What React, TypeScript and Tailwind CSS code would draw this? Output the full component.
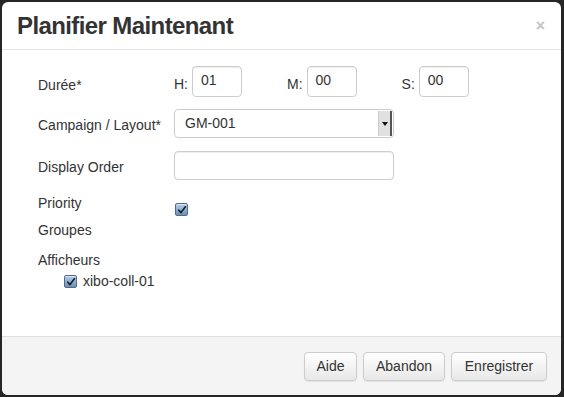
import React from "react";

const Check = () => (
  <span className="inline-flex h-[13px] w-[13px] items-center justify-center rounded-[2px] border border-[#4f6a8c] bg-gradient-to-b from-[#b7cde3] to-[#6f8fb4] shadow-[inset_0_1px_0_rgba(255,255,255,0.5)]">
    <svg width="10" height="10" viewBox="0 0 10 10">
      <path d="M1.8 5.2 L4 7.6 L8.4 1.8" fill="none" stroke="#16222f" strokeWidth="1.7" strokeLinecap="round" strokeLinejoin="round" />
    </svg>
  </span>
);

const TimeInput = ({ label, value }: { label: string; value: string }) => (
  <div className="flex items-center gap-[4px]">
    <span className="pt-[6px]">{label}</span>
    <div className="h-[31px] w-[50px] rounded-[4px] border border-[#ccc] bg-white pl-[8px] pt-[3px] shadow-[inset_0_1px_1px_rgba(0,0,0,0.075)]">
      {value}
    </div>
  </div>
);

const buttons = [
  { label: "Aide", w: "w-[53px]" },
  { label: "Abandon", w: "w-[82px]" },
  { label: "Enregistrer", w: "w-[96px]" },
];

export default function App() {
  return (
    <div
      className="h-[397px] w-[564px] overflow-hidden bg-[#262626] pl-[2px] pt-[2px] text-[14px] text-[#333]"
      style={{ fontFamily: '"Liberation Sans", Arial, sans-serif' }}
    >
      <div className="flex h-[393px] w-[559px] flex-col overflow-hidden rounded-[6px] bg-white">
        {/* header */}
        <div className="flex h-[48px] items-center justify-between border-b border-[#e5e5e5] pl-[15px] pr-[16px]">
          <h3 className="text-[24px] font-bold leading-none tracking-[-0.6px] text-[#333]">Planifier Maintenant</h3>
          <span className="text-[16px] font-bold text-[#c4c4c4]">×</span>
        </div>

        {/* body */}
        <div className="flex-1 pl-[36px] pt-[16px]">
          <div className="flex h-[31px] items-center">
            <div className="w-[136px] pt-[7px]">Durée*</div>
            <div className="flex items-center">
              <TimeInput label="H:" value="01" />
              <div className="ml-[45px]">
                <TimeInput label="M:" value="00" />
              </div>
              <div className="ml-[45px]">
                <TimeInput label="S:" value="00" />
              </div>
            </div>
          </div>

          <div className="mt-[12px] flex h-[29px] items-center">
            <div className="w-[136px] pt-[4px]">Campaign / Layout*</div>
            <div className="flex h-[29px] w-[220px] items-center rounded-[4px] border border-[#ccc] bg-white">
              <span className="flex-1 pl-[10px]">GM-001</span>
              <span className="mr-[1px] flex h-[25px] w-[14px] items-center justify-center border-l border-[#ccc] border-r-2 border-r-[#555] bg-[#e1e1e1]">
                <svg width="6" height="4" viewBox="0 0 6 4">
                  <path d="M0 0 L6 0 L3 4 Z" fill="#111" />
                </svg>
              </span>
            </div>
          </div>

          <div className="mt-[13px] flex h-[29px] items-center">
            <div className="w-[136px] pt-[4px]">Display Order</div>
            <div className="h-[29px] w-[220px] rounded-[4px] border border-[#ccc] bg-white shadow-[inset_0_1px_1px_rgba(0,0,0,0.075)]" />
          </div>

          <div className="mt-[13px] flex h-[21px] leading-[21px]">
            <div className="w-[137px]">Priority</div>
            <div className="flex pt-[10px]">
              <Check />
            </div>
          </div>

          <div className="mt-[6px] leading-[21px]">Groupes</div>

          <div className="mt-[9px] leading-[21px]">Afficheurs</div>
          <div className="flex h-[21px] items-center gap-[6px] pl-[26px]">
            <Check />
            <span>xibo-coll-01</span>
          </div>
        </div>

        {/* footer */}
        <div className="flex h-[59px] items-center justify-end gap-[6px] border-t border-[#e0e0e0] bg-[#f4f4f4] pr-[14px] pt-[1px]">
          {buttons.map((b) => (
            <button
              key={b.label}
              className={`${b.w} h-[29px] rounded-[4px] border border-[#ccc] bg-gradient-to-b from-white to-[#e8e8e8] text-[14px] text-[#333] shadow-[0_1px_1px_rgba(0,0,0,0.08)]`}
            >
              {b.label}
            </button>
          ))}
        </div>
      </div>
    </div>
  );
}
